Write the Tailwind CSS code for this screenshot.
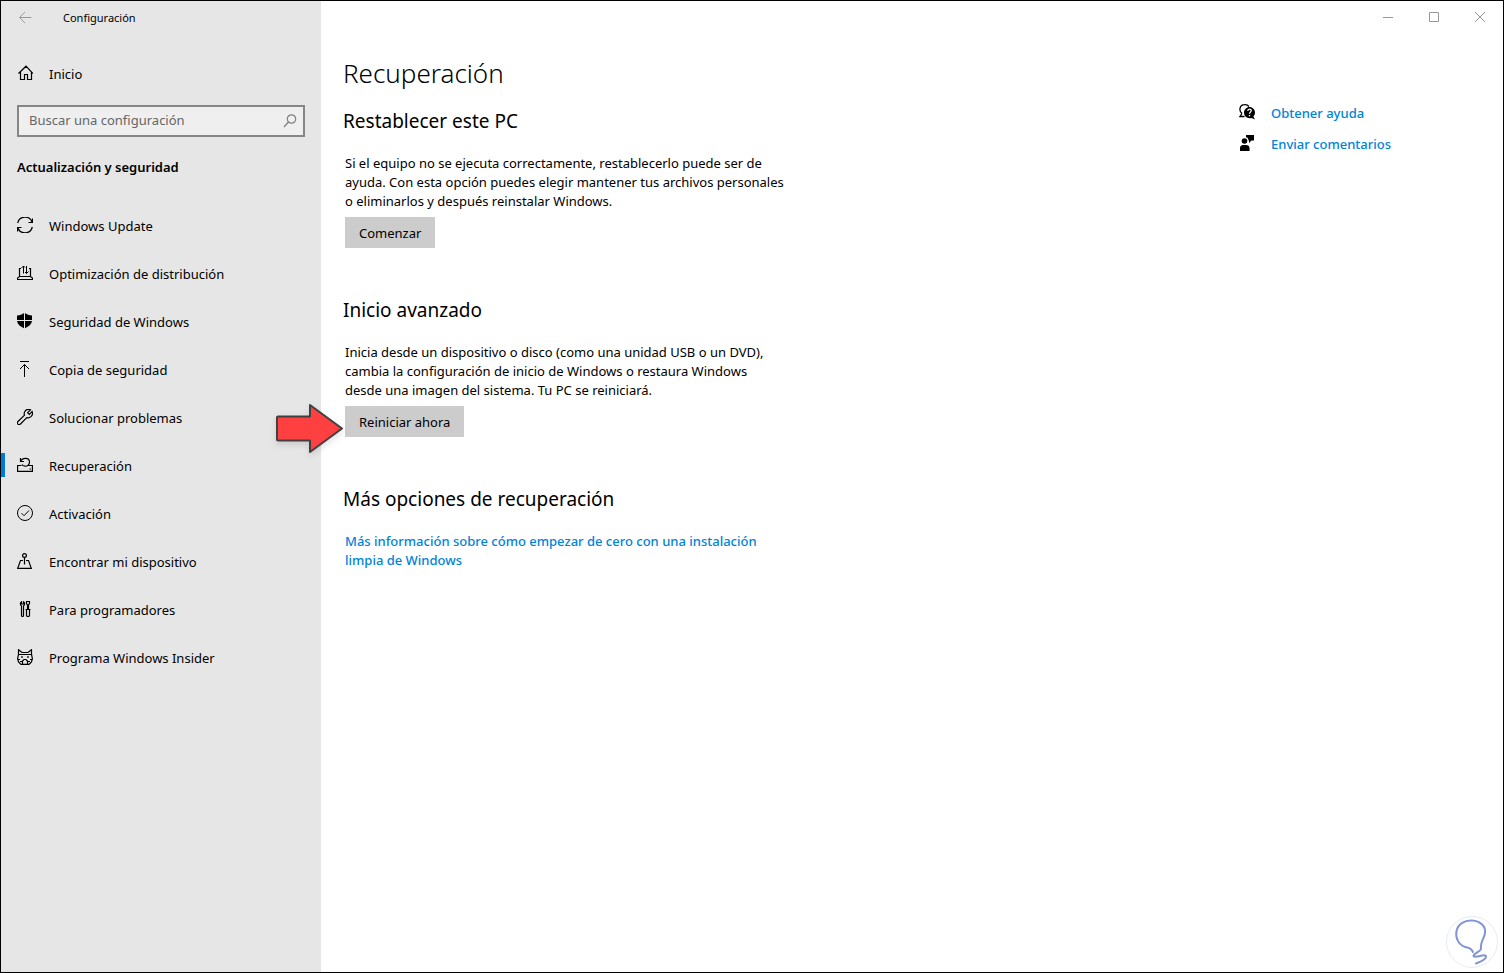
<!DOCTYPE html>
<html lang="es">

<head>
    <meta charset="utf-8">
    <meta name="viewport" content="width=device-width, initial-scale=1.0">
    <title>Configuración</title>
    <script src="https://cdn.jsdelivr.net/npm/@tailwindcss/browser@4"></script>
</head>

<body class="bg-white text-black text-[13px] leading-5 font-['Noto_Sans',sans-serif]">
    <div class="relative flex min-h-screen border border-black">

        <!-- SIDEBAR -->
        <aside class="w-80 shrink-0 bg-[#e6e6e6]">
            <header class="flex items-center h-[34px] pl-[17px]">
                <button type="button" aria-label="Atrás" class="w-4 h-4 text-[#999999]">
                    <svg class="w-4 h-4" viewBox="0 0 16 16" fill="none" stroke="currentColor">
                        <path d="M2 7.500H13.500M7 2L1.500 7.500L7 13" />
                    </svg>
                </button>
                <span class="ml-[29px] text-[11px]">Configuración</span>
            </header>

            <a href="#" class="flex items-center h-12 mt-[14px] pl-4">
                <svg class="w-4 h-4 mr-4" viewBox="0 0 16 16" fill="none" stroke="currentColor" stroke-width="1.2">
                    <path d="M1.500 8.500L9 1.200L16 8.500M3.500 7V14.500H7.500V9.500H10.500V14.500H14.500V7" />
                </svg>
                <span class="pt-[2px]">Inicio</span>
            </a>

            <div class="flex items-center h-8 mx-4 mt-2 border-2 border-[#868686] bg-[#efefef]">
                <input id="search" type="text" placeholder="Buscar una configuración"
                    class="flex-1 min-w-0 h-full pl-[10px] pb-[2px] bg-transparent outline-none placeholder:text-[#666666]">
                <label for="search" aria-label="Buscar" class="mr-[5px] text-[#808080]">
                    <svg class="w-4 h-4" viewBox="0 0 16 16" fill="none" stroke="currentColor" stroke-width="1.2">
                        <circle cx="9.500" cy="6" r="4.200" />
                        <path d="M6.500 9L2 14" />
                    </svg>
                </label>
            </div>

            <h2 class="mt-[20px] pl-4 font-semibold">Actualización y seguridad</h2>

            <nav class="mt-6">
                <a href="#" class="flex items-center h-12 pl-4">
                    <svg class="w-4 h-4 mr-4" viewBox="0 0 16 16" fill="none" stroke="currentColor" stroke-width="1.200">
                        <path d="M.7 6A7.500 7.500 0 0 1 15.200 5.500M15.500 1.500V5.500H11.500M15.300 10A7.500 7.500 0 0 1 .8 10.500M.5 14.500V10.500H4.500" />
                    </svg>
                    <span class="pt-[2px]">Windows Update</span>
                </a>
                <a href="#" class="flex items-center h-12 pl-4">
                    <svg class="w-4 h-4 mr-4" viewBox="0 0 16 16" fill="none" stroke="currentColor">
                        <path d="M4 3.500H2.500V11.500M12 3.500H13.500V11.500M2.500 11.500H13.500L15.500 13V14.500H.5V13Z" stroke-width="1.200" />
                        <path d="M6.500 8.500V1M4.500 3L6.500 1L8 2.500M9.500 1V8.500M8 7L9.500 8.500L11.500 6.500" />
                    </svg>
                    <span class="pt-[2px]">Optimización de distribución</span>
                </a>
                <a href="#" class="flex items-center h-12 pl-4">
                    <svg class="w-4 h-4 mr-4" viewBox="0 0 16 16" fill="currentColor">
                        <path d="M7 0V7H0V2.500C3 2.500 5 1.500 7 0ZM8 0C10 1.500 12 2.500 15 2.500V7H8ZM0 8H7V15.200C3 13.500 .5 11.500 0 8ZM8 8H15C14.500 11.500 12 13.500 8 15.200Z" />
                    </svg>
                    <span class="pt-[2px]">Seguridad de Windows</span>
                </a>
                <a href="#" class="flex items-center h-12 pl-4">
                    <svg class="w-4 h-4 mr-4" viewBox="0 0 16 16" fill="none" stroke="currentColor">
                        <path d="M3 .5H12M7.500 16V3.500M3 8L7.500 3.500L12 8" />
                    </svg>
                    <span class="pt-[2px]">Copia de seguridad</span>
                </a>
                <a href="#" class="flex items-center h-12 pl-4">
                    <svg class="w-4 h-4 mr-4" viewBox="0 0 16 16" fill="none" stroke="currentColor" stroke-width="1.200">
                        <path d="M13.500 .9C11.500 0 9 .6 7.800 2.500C7 3.800 7.100 5.200 7.500 6.200L1 12.500C.2 13.300 .2 14.400 .9 15.100C1.600 15.800 2.700 15.700 3.500 15L9.800 8.600C11 9 12.500 8.900 13.700 7.900C15.500 6.500 15.900 4.300 15.100 2.500L12.300 5.300L10.700 3.700Z" />
                    </svg>
                    <span class="pt-[2px]">Solucionar problemas</span>
                </a>
                <a href="#" aria-current="page" class="flex items-center h-12">
                    <span class="w-1 h-6 mr-3 bg-[#0078d7]"></span>
                    <svg class="w-4 h-4 mr-4" viewBox="0 0 16 16" fill="none" stroke="currentColor" stroke-width="1.200">
                        <path d="M4.500 8.500H.6V14.400H15.400V8.500H11M12.500 12H14" />
                        <path d="M3.500 1V4.500H7M3.800 4.500C5 .3 12.500 .3 12.500 5C12.500 7.500 10.500 9.500 8 9.200C6.500 9 5.500 8.500 5 7.500" />
                    </svg>
                    <span class="pt-[2px]">Recuperación</span>
                </a>
                <a href="#" class="flex items-center h-12 pl-4">
                    <svg class="w-4 h-4 mr-4" viewBox="0 0 16 16" fill="none" stroke="currentColor">
                        <circle cx="8" cy="8" r="7.500" />
                        <path d="M4.500 8.200L7 10.700L12 5.500" />
                    </svg>
                    <span class="pt-[2px]">Activación</span>
                </a>
                <a href="#" class="flex items-center h-12 pl-4">
                    <svg class="w-4 h-4 mr-4" viewBox="0 0 16 16" fill="none" stroke="currentColor" stroke-width="1.200">
                        <circle cx="7.500" cy="2.500" r="1.900" />
                        <path d="M7.500 4.500V11.500M6 7.500H3.500L.7 15.400H14.300L11.500 7.500H9" />
                    </svg>
                    <span class="pt-[2px]">Encontrar mi dispositivo</span>
                </a>
                <a href="#" class="flex items-center h-12 pl-4">
                    <svg class="w-4 h-4 mr-4" viewBox="0 0 16 16" fill="none" stroke="currentColor" stroke-width="1.200">
                        <path d="M4.500 .8C3 1.500 3 4 4.500 5V14.500C4.500 15.800 6.500 15.800 6.500 14.500V5C8 4 8 1.500 6.500 .8V3H4.500Z" />
                        <path d="M9.500 .5H12.500V2.500L11.500 4V8.500H10.500V4L9.500 2.500ZM8.500 8.500H13.500M9.500 8.500V14.500C9.500 15.800 12.500 15.800 12.500 14.500V8.500" />
                    </svg>
                    <span class="pt-[2px]">Para programadores</span>
                </a>
                <a href="#" class="flex items-center h-12 pl-4">
                    <svg class="w-4 h-4 mr-4" viewBox="0 0 16 16" fill="none" stroke="currentColor" stroke-width="1.200">
                        <path d="M1.500 5.500V.7L5 3.500H11L14.500 .7V5.500L15.400 9.500L14.500 13L12 15.400H4L1.500 13L.6 9.500ZM1.500 5.500H14.500" />
                        <path d="M5 7V9M11 7V9M.6 10.500H3M15.400 10.500H13M5.500 15V12L7 10.500H9L10.500 12V15M3 12.500H5.500M10.500 12.500H13" />
                    </svg>
                    <span class="pt-[2px]">Programa Windows Insider</span>
                </a>
            </nav>
        </aside>

        <!-- CONTENT -->
        <div class="flex flex-col flex-1 min-w-0">
            <div class="flex justify-end h-8 text-[#999999]">
                <button type="button" aria-label="Minimizar" class="flex items-center justify-center w-[46px]">
                    <svg class="w-[10px] h-[10px]" viewBox="0 0 10 10" fill="none" stroke="currentColor"><path d="M0 5.500H10" /></svg>
                </button>
                <button type="button" aria-label="Maximizar" class="flex items-center justify-center w-[46px]">
                    <svg class="w-[10px] h-[10px]" viewBox="0 0 10 10" fill="none" stroke="currentColor"><path d="M.5 .5H9.500V9.500H.5Z" /></svg>
                </button>
                <button type="button" aria-label="Cerrar" class="flex items-center justify-center w-[46px]">
                    <svg class="w-[10px] h-[10px]" viewBox="0 0 10 10" fill="none" stroke="currentColor"><path d="M0 0L10 10M10 0L0 10" /></svg>
                </button>
            </div>

            <div class="flex justify-between">
                <main class="pt-[20px] pl-[22px]">
                    <h1 class="text-[26px] leading-10 font-light">Recuperación</h1>

                    <section class="mt-[14px]">
                        <h2 class="text-[19px] leading-7">Restablecer este PC</h2>
                        <div class="mt-[19px] pl-[2px]">
                            <p class="w-[440px] leading-[19px]">Si el equipo no se ejecuta correctamente, restablecerlo puede ser de ayuda. Con esta opción puedes elegir mantener tus archivos personales o eliminarlos y después reinstalar Windows.</p>
                            <button type="button" class="h-[31px] mt-[6px] px-[14px] bg-[#cccccc]">Comenzar</button>
                        </div>
                    </section>

                    <section class="mt-12">
                        <h2 class="text-[19px] leading-7">Inicio avanzado</h2>
                        <div class="mt-[19px] pl-[2px]">
                            <p class="w-[440px] leading-[19px]">Inicia desde un dispositivo o disco (como una unidad USB o un DVD), cambia la configuración de inicio de Windows o restaura Windows desde una imagen del sistema. Tu PC se reiniciará.</p>
                            <div class="relative mt-[6px] w-fit">
                                <button type="button" class="h-[31px] px-[14px] bg-[#cccccc]">Reiniciar ahora</button>
                                <!-- pointer to the restart button -->
                                <svg class="absolute right-full -top-1 w-[72px] h-[54px] drop-shadow-md" viewBox="0 0 72 54">
                                    <path d="M5 14.500H37V3L69 26.500L37 50V38.500H5Q4 38.500 4 37.500V15.500Q4 14.500 5 14.500Z" fill="#ff4040" stroke="#404040" stroke-width="2" stroke-linejoin="round" />
                                </svg>
                            </div>
                        </div>
                    </section>

                    <section class="mt-12">
                        <h2 class="text-[19px] leading-7">Más opciones de recuperación</h2>
                        <div class="mt-[19px] pl-[2px]">
                            <a href="#" class="block w-[440px] leading-[19px] font-medium text-[#0083d9]">Más información sobre cómo empezar de cero con una instalación limpia de Windows</a>
                        </div>
                    </section>
                </main>

                <ul class="w-[264px] pt-[63px] font-medium text-[#0083d9]">
                    <li>
                        <a href="#" class="flex items-center h-[31px]">
                            <svg class="w-4 h-4 mr-4 text-black" viewBox="0 0 16 16">
                                <path d="M3 9.500L1 12.500H5.500M3 9.500C-.5 6.500 .5 1 5.500 .7C7.500 .5 9 1.200 10 2.500" fill="none" stroke="currentColor" stroke-width="1.300" />
                                <path d="M10.500 3C13.500 3 16 5.500 16 8.500C16 10.300 15.300 11.500 14.300 12.500L16 15.500L12.500 14C8.500 15 5 12.500 5 8.500C5 5.500 7.500 3 10.500 3Z" fill="currentColor" />
                                <path d="M8.800 7C8.800 4.500 12.300 4.600 12.200 6.800C12.200 8 10.500 8.300 10.500 9.800M10.500 11V12.200" fill="none" stroke="#ffffff" stroke-width="1.300" />
                            </svg>
                            <span class="pt-[2px]">Obtener ayuda</span>
                        </a>
                    </li>
                    <li>
                        <a href="#" class="flex items-center h-[31px]">
                            <svg class="w-4 h-4 mr-4 text-black" viewBox="0 0 16 16" fill="currentColor">
                                <circle cx="5.500" cy="6" r="2.800" />
                                <path d="M1 16V13C1 11 2.500 10 4 10H7C9 10 10.500 11 10.500 13V16ZM7 0H15V5.500H12.500L10 8V5.500H9.500C9.500 3.500 8.500 2.500 7 2.200Z" />
                            </svg>
                            <span class="pt-[2px]">Enviar comentarios</span>
                        </a>
                    </li>
                </ul>
            </div>
        </div>

        <!-- watermark -->
        <svg class="absolute right-[5px] bottom-1 w-[52px] h-[52px]" viewBox="0 0 52 52" fill="none">
            <circle cx="26" cy="26" r="25.500" fill="#ffffff" stroke="#e6ebf5" />
            <path d="M27 36C25 32 23 32 19 31C13 29 9 22 10.500 15C12 8 19 4 26 4.500C34 5 40 10 39 17C38.500 22 34 26 35 33C34 36 28 37 27.500 40C30 43 38 37 40 40C41 43 34 46 30 47.500" stroke="#8195d4" stroke-width="2" stroke-linecap="round" stroke-linejoin="round" />
        </svg>
    </div>
</body>

</html>
